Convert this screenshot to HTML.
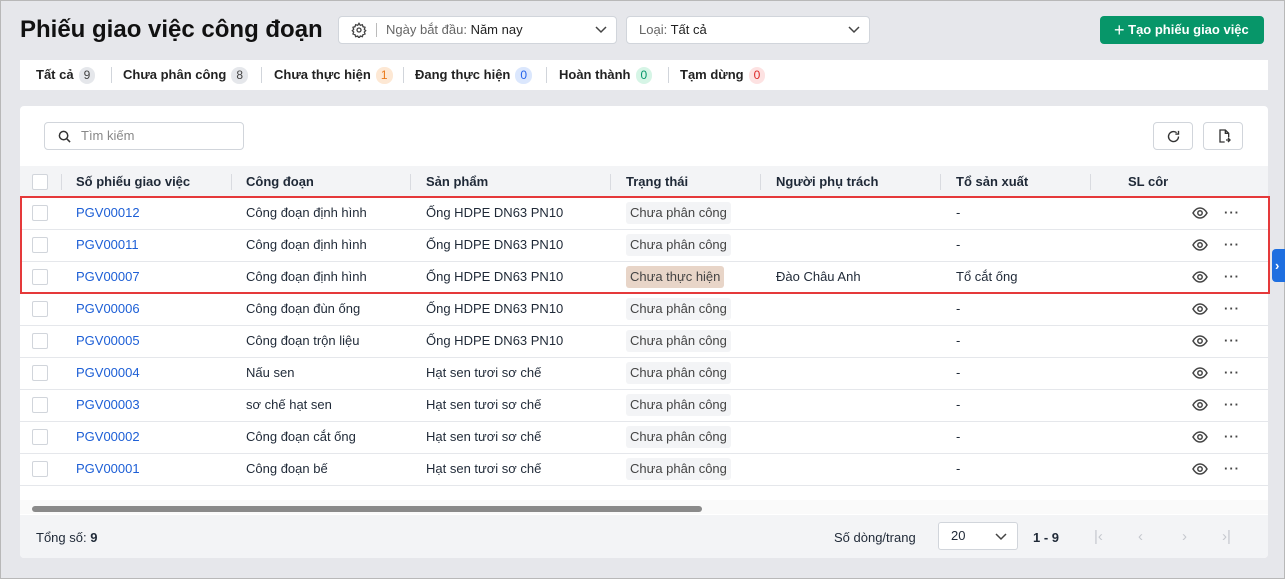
<!DOCTYPE html><html><head><meta charset="utf-8"><style>
*{box-sizing:border-box;margin:0;padding:0}
body{width:1285px;height:579px;background:#e6e7eb;font-family:"Liberation Sans",sans-serif;font-size:13px;color:#1f2937;position:relative;overflow:hidden;box-shadow:inset 0 0 0 1px #b8b8b8}
.a{position:absolute}
.dd{position:absolute;top:16px;height:28px;background:#fff;border:1px solid #d1d5db;border-radius:4px;font-size:13px;line-height:26px;color:#222}
.tabs{left:20px;top:60px;width:1248px;height:30px;background:#fff;font-size:13px;font-weight:bold;color:#222}
.tabs span.t{position:absolute;top:7px}
.b{display:inline-block;border-radius:8px;padding:0 5px;font-weight:normal;margin-left:5px;line-height:17px;font-size:12px}
.sep{position:absolute;top:7px;width:1px;height:16px;background:#d1d5db}
.card{left:20px;top:106px;width:1248px;height:452px;background:#fff;border-radius:4px;overflow:hidden}
.hd{position:absolute;left:0;top:60px;width:1248px;height:32px;background:#f3f4f6;border-bottom:1px solid #e5e7eb;font-weight:bold;font-size:13px}
.row{position:absolute;left:0;width:1248px;height:32px;border-bottom:1px solid #e5e7eb;font-size:13px}
.c{position:absolute;top:8px;white-space:nowrap}
.hd .c{top:8px}
.row .c{top:7px}
.cb{position:absolute;left:12px;top:8px;width:16px;height:16px;border:1px solid #d1d5db;border-radius:2px;background:#fff}
.row .cb{top:7px}
.lk{color:#1d5fd6;font-weight:normal}
.st{position:absolute;left:606px;top:4px;height:22px;line-height:22px;padding:0 4px;background:#f3f4f6;border-radius:3px;color:#444}
.hs{position:absolute;top:8px;width:1px;height:16px;background:#d9dbe0}
.eye{position:absolute;left:1172px;top:9px}
.dots{position:absolute;left:1204px;top:7px;font-weight:bold;letter-spacing:1px;color:#444}
.ib{position:absolute;top:16px;width:40px;height:28px;border:1px solid #d1d5db;border-radius:4px;background:#fff}
</style></head><body>
<div class="a" style="left:20px;top:16px;font-size:24px;font-weight:bold;color:#111">Phiếu giao việc công đoạn</div>
<div class="dd" style="left:338px;width:279px">
<svg class="a" style="left:12px;top:5px" width="16" height="16" viewBox="0 0 24 24" fill="none" stroke="#444" stroke-width="2"><circle cx="12" cy="12" r="3"/><path d="M12 2l2 3 3-1 1 3 3 1-1 3 2 2-2 2 1 3-3 1-1 3-3-1-2 3-2-3-3 1-1-3-3-1 1-3-2-2 2-2-1-3 3-1 1-3 3 1z"/></svg>
<span class="a" style="left:37px;top:6px;width:1px;height:14px;background:#bbb"></span>
<span class="a" style="left:47px"><span style="color:#666">Ngày bắt đầu:</span> Năm nay</span>
<svg class="a" style="left:256px;top:9px" width="12" height="8" viewBox="0 0 12 8" fill="none" stroke="#444" stroke-width="1.5"><path d="M1 1l5 5 5-5"/></svg></div>
<div class="dd" style="left:626px;width:244px"><span class="a" style="left:12px"><span style="color:#666">Loại:</span> Tất cả</span>
<svg class="a" style="left:221px;top:9px" width="12" height="8" viewBox="0 0 12 8" fill="none" stroke="#444" stroke-width="1.5"><path d="M1 1l5 5 5-5"/></svg></div>
<div class="a" style="left:1100px;top:16px;width:164px;height:28px;background:#079669;border-radius:4px;color:#fff;font-weight:bold;font-size:13px;line-height:28px;padding-left:14px"><span style="font-size:18px;font-weight:normal;vertical-align:-2px">+</span> Tạo phiếu giao việc</div>
<div class="a tabs">
<span class="t" style="left:16px">Tất cả<span class="b" style="background:#e5e7eb;color:#444">9</span></span><span class="sep" style="left:91px"></span>
<span class="t" style="left:103px">Chưa phân công<span class="b" style="background:#e5e7eb;color:#444">8</span></span><span class="sep" style="left:241px"></span>
<span class="t" style="left:254px">Chưa thực hiện<span class="b" style="background:#fde8d4;color:#ea7a1a">1</span></span><span class="sep" style="left:383px"></span>
<span class="t" style="left:395px">Đang thực hiện<span class="b" style="background:#dbe7fd;color:#2563eb">0</span></span><span class="sep" style="left:526px"></span>
<span class="t" style="left:539px">Hoàn thành<span class="b" style="background:#d6f5e6;color:#059669">0</span></span><span class="sep" style="left:648px"></span>
<span class="t" style="left:660px">Tạm dừng<span class="b" style="background:#fde2e2;color:#dc2626">0</span></span>
</div>
<div class="a card">
<div class="a" style="left:24px;top:16px;width:200px;height:28px;border:1px solid #d1d5db;border-radius:4px;color:#888;line-height:26px;padding-left:36px">Tìm kiếm
<svg class="a" style="left:13px;top:7px" width="13" height="13" viewBox="0 0 14 14" fill="none" stroke="#333" stroke-width="1.6"><circle cx="6" cy="6" r="4.5"/><path d="M9.5 9.5L13 13"/></svg></div>
<div class="ib" style="left:1133px"><svg class="a" style="left:12px;top:6px" width="15" height="15" viewBox="0 0 24 24" fill="none" stroke="#333" stroke-width="2.2"><path d="M20 12a8 8 0 1 1-3-6.2M20 3v5h-5"/></svg></div>
<div class="ib" style="left:1183px"><svg class="a" style="left:12px;top:5px" width="16" height="16" viewBox="0 0 24 24" fill="none" stroke="#333" stroke-width="2"><path d="M13 21H6V3h8l5 5v6M14 3v5h5M15 18h6M18 15l3 3-3 3"/></svg></div>
<div class="hd"><div class="cb"></div>
<span class="hs" style="left:41px"></span><span class="c" style="left:56px">Số phiếu giao việc</span>
<span class="hs" style="left:211px"></span><span class="c" style="left:226px">Công đoạn</span>
<span class="hs" style="left:390px"></span><span class="c" style="left:406px">Sản phẩm</span>
<span class="hs" style="left:590px"></span><span class="c" style="left:606px">Trạng thái</span>
<span class="hs" style="left:740px"></span><span class="c" style="left:756px">Người phụ trách</span>
<span class="hs" style="left:920px"></span><span class="c" style="left:936px">Tổ sản xuất</span>
<span class="hs" style="left:1070px"></span><span class="c" style="left:1108px;width:40px;overflow:hidden">SL công</span>
</div>
<div id="rows"></div>
<div class="a" style="left:0;top:394px;width:1248px;height:14px;background:#fafafa"></div>
<div class="a" style="left:12px;top:400px;width:670px;height:6px;background:#8a8a8a;border-radius:3px"></div>
<div class="a" style="left:0;top:409px;width:1248px;height:43px;background:#f3f4f6">
<span class="a" style="left:16px;top:15px">Tổng số: <b>9</b></span>
<span class="a" style="left:814px;top:15px">Số dòng/trang</span>
<div class="a" style="left:918px;top:7px;width:80px;height:28px;background:#fff;border:1px solid #d1d5db;border-radius:3px;line-height:26px;padding-left:12px">20
<svg class="a" style="left:56px;top:10px" width="12" height="8" viewBox="0 0 12 8" fill="none" stroke="#444" stroke-width="1.5"><path d="M1 1l5 5 5-5"/></svg></div>
<span class="a" style="left:1013px;top:15px;font-weight:bold">1 - 9</span>
<span class="a" style="left:1074px;top:13px;color:#c5c8ce;font-size:15px;letter-spacing:0">|‹</span>
<span class="a" style="left:1118px;top:13px;color:#c5c8ce;font-size:15px">‹</span>
<span class="a" style="left:1162px;top:13px;color:#c5c8ce;font-size:15px">›</span>
<span class="a" style="left:1202px;top:13px;color:#c5c8ce;font-size:15px">›|</span>
</div>
</div>
<div class="a" style="left:20px;top:196px;width:1250px;height:98px;border:2px solid #e5393a"></div>
<div class="a" style="left:1272px;top:249px;width:13px;height:33px;background:#1e6fe0;border-radius:4px 0 0 4px;color:#fff;font-weight:bold;font-size:13px;line-height:33px;padding-left:3px">›</div>
<script>
var d=[["PGV00012","Công đoạn định hình","Ống HDPE DN63 PN10","Chưa phân công","","-"],
["PGV00011","Công đoạn định hình","Ống HDPE DN63 PN10","Chưa phân công","","-"],
["PGV00007","Công đoạn định hình","Ống HDPE DN63 PN10","Chưa thực hiện","Đào Châu Anh","Tổ cắt ống"],
["PGV00006","Công đoạn đùn ống","Ống HDPE DN63 PN10","Chưa phân công","","-"],
["PGV00005","Công đoạn trộn liệu","Ống HDPE DN63 PN10","Chưa phân công","","-"],
["PGV00004","Nấu sen","Hạt sen tươi sơ chế","Chưa phân công","","-"],
["PGV00003","sơ chế hạt sen","Hạt sen tươi sơ chế","Chưa phân công","","-"],
["PGV00002","Công đoạn cắt ống","Hạt sen tươi sơ chế","Chưa phân công","","-"],
["PGV00001","Công đoạn bế","Hạt sen tươi sơ chế","Chưa phân công","","-"]];
var h="";d.forEach(function(r,i){var bg=r[3]=="Chưa thực hiện"?"background:#e8d5c8":"";
h+='<div class="row" style="top:'+(92+i*32)+'px"><div class="cb"></div><span class="c lk" style="left:56px">'+r[0]+'</span><span class="c" style="left:226px">'+r[1]+'</span><span class="c" style="left:406px">'+r[2]+'</span><span class="st" style="'+bg+'">'+r[3]+'</span><span class="c" style="left:756px">'+r[4]+'</span><span class="c" style="left:936px">'+r[5]+'</span><svg class="eye" width="16" height="12" viewBox="0 0 16 12" fill="none" stroke="#444" stroke-width="1.5"><path d="M1 6c2-3.5 4.5-5 7-5s5 1.5 7 5c-2 3.5-4.5 5-7 5s-5-1.5-7-5z"/><circle cx="8" cy="6" r="2.2"/></svg><span class="dots">···</span></div>';});
document.getElementById("rows").innerHTML=h;
</script>
</body></html>
